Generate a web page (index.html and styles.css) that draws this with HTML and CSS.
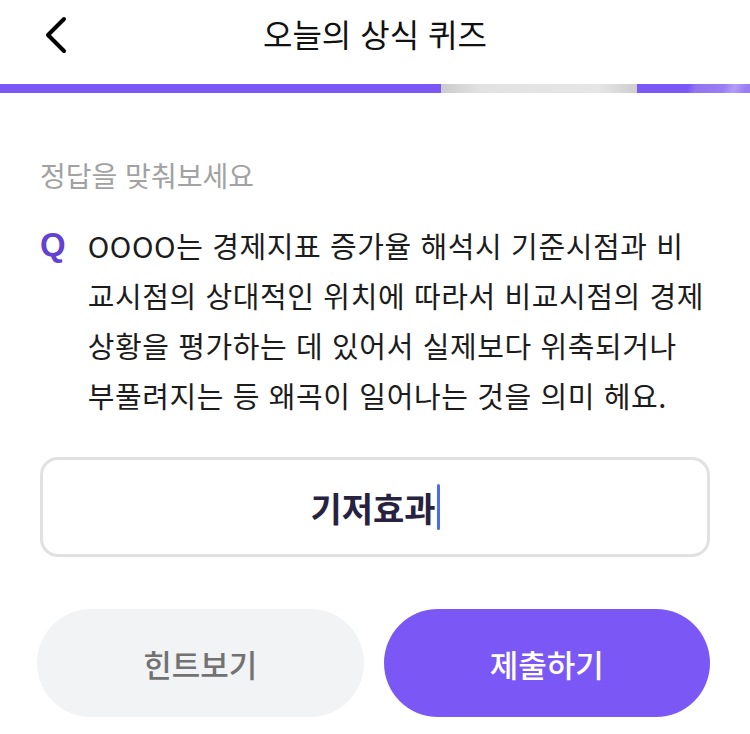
FILE: index.html
```html
<!DOCTYPE html>
<html lang="ko">

<head>
    <meta charset="UTF-8">
    <meta name="viewport" content="width=device-width, initial-scale=1.0">
    <title>오늘의 상식 퀴즈</title>
    <link rel="stylesheet" href="styles.css">
</head>

<body>
    <!-- top bar -->
    <header class="topbar">
        <button class="back" aria-label="뒤로">
            <svg width="26" height="38" viewBox="0 0 26 38">
                <path d="M21 3 L5 19 L21 35" fill="none" stroke="#000" stroke-width="4" stroke-linecap="round" stroke-linejoin="round" />
            </svg>
        </button>
        <h1 class="title">오늘의 상식 퀴즈</h1>
    </header>

    <!-- progress with loading shimmer -->
    <div class="progress">
        <div class="progress-fill"></div>
        <div class="progress-shine"></div>
        <div class="progress-end"></div>
    </div>

    <main class="quiz">
        <p class="guide">정답을 맞춰보세요</p>

        <div class="question">
            <span class="q-mark">Q</span>
            <p class="q-text">OOOO는 경제지표 증가율 해석시 기준시점과 비교시점의 상대적인 위치에 따라서 비교시점의 경제 상황을 평가하는 데 있어서 실제보다 위축되거나 부풀려지는 등 왜곡이 일어나는 것을 의미 헤요.</p>
        </div>

        <div class="answer">
            <span class="answer-text">기저효과</span><span class="caret"></span>
        </div>

        <div class="actions">
            <button class="btn btn-hint">힌트보기</button>
            <button class="btn btn-submit">제출하기</button>
        </div>
    </main>
</body>

</html>
```

FILE: styles.css
```css
html,
body {
    margin: 0;
    padding: 0;
    background: #fff;
    font-family: "Noto Sans CJK KR", "Noto Sans", sans-serif;
}

.topbar {
    position: relative;
    height: 84px;
    display: flex;
    align-items: center;
    justify-content: center;
}

.back {
    position: absolute;
    left: 43px;
    top: 16px;
    padding: 0;
    border: 0;
    background: none;
}

.title {
    margin: 0 0 18px;
    font-size: 32px;
    font-weight: 400;
    color: #111;
}

.progress {
    display: flex;
    height: 9px;
}

.progress-fill {
    width: 441px;
    background: #7b58f6;
}

.progress-shine {
    width: 196px;
    background: linear-gradient(90deg, #cbcbcb, #e2e2e2 20%, #e6e6e6 80%, #cdcdcd);
}

.progress-end {
    flex: 1;
    background: linear-gradient(110deg, #7b58f6 45%, #9475f2 52%, #9a7cf3 75%, #b39df5 85%, #9a7cf3 95%);
}

.quiz {
    padding: 0 40px;
}

.guide {
    margin: 60px 0 0;
    font-size: 28px;
    line-height: 44px;
    color: #a2a2a2;
}

.question {
    display: flex;
    gap: 22px;
    margin-top: 23px;
}

.q-mark {
    font-family: "Liberation Sans", sans-serif;
    font-weight: 700;
    font-size: 33px;
    line-height: 50px;
    color: #6442cf;
}

.q-text {
    margin: 0;
    font-size: 29px;
    line-height: 50px;
    color: #1c1c1c;
    letter-spacing: 0.6px;
}

.answer {
    margin-top: 37px;
    height: 94px;
    border: 3px solid #e1e1e1;
    border-radius: 18px;
    display: flex;
    align-items: center;
    justify-content: center;
}

.answer-text {
    font-size: 34px;
    font-weight: 700;
    color: #27223f;
}

.caret {
    width: 3px;
    height: 46px;
    margin-left: 1px;
    border-radius: 2px;
    background: #4b6cf2;
}

.actions {
    display: flex;
    gap: 20px;
    margin-top: 52px;
    margin-left: -3px;
}

.btn {
    flex: 1;
    height: 108px;
    border: 0;
    border-radius: 54px;
    font-family: inherit;
    font-size: 31px;
    font-weight: 500;
}

.btn-hint {
    background: #f2f3f5;
    color: #727272;
}

.btn-submit {
    background: #7b58f6;
    color: #fff;
}
```
